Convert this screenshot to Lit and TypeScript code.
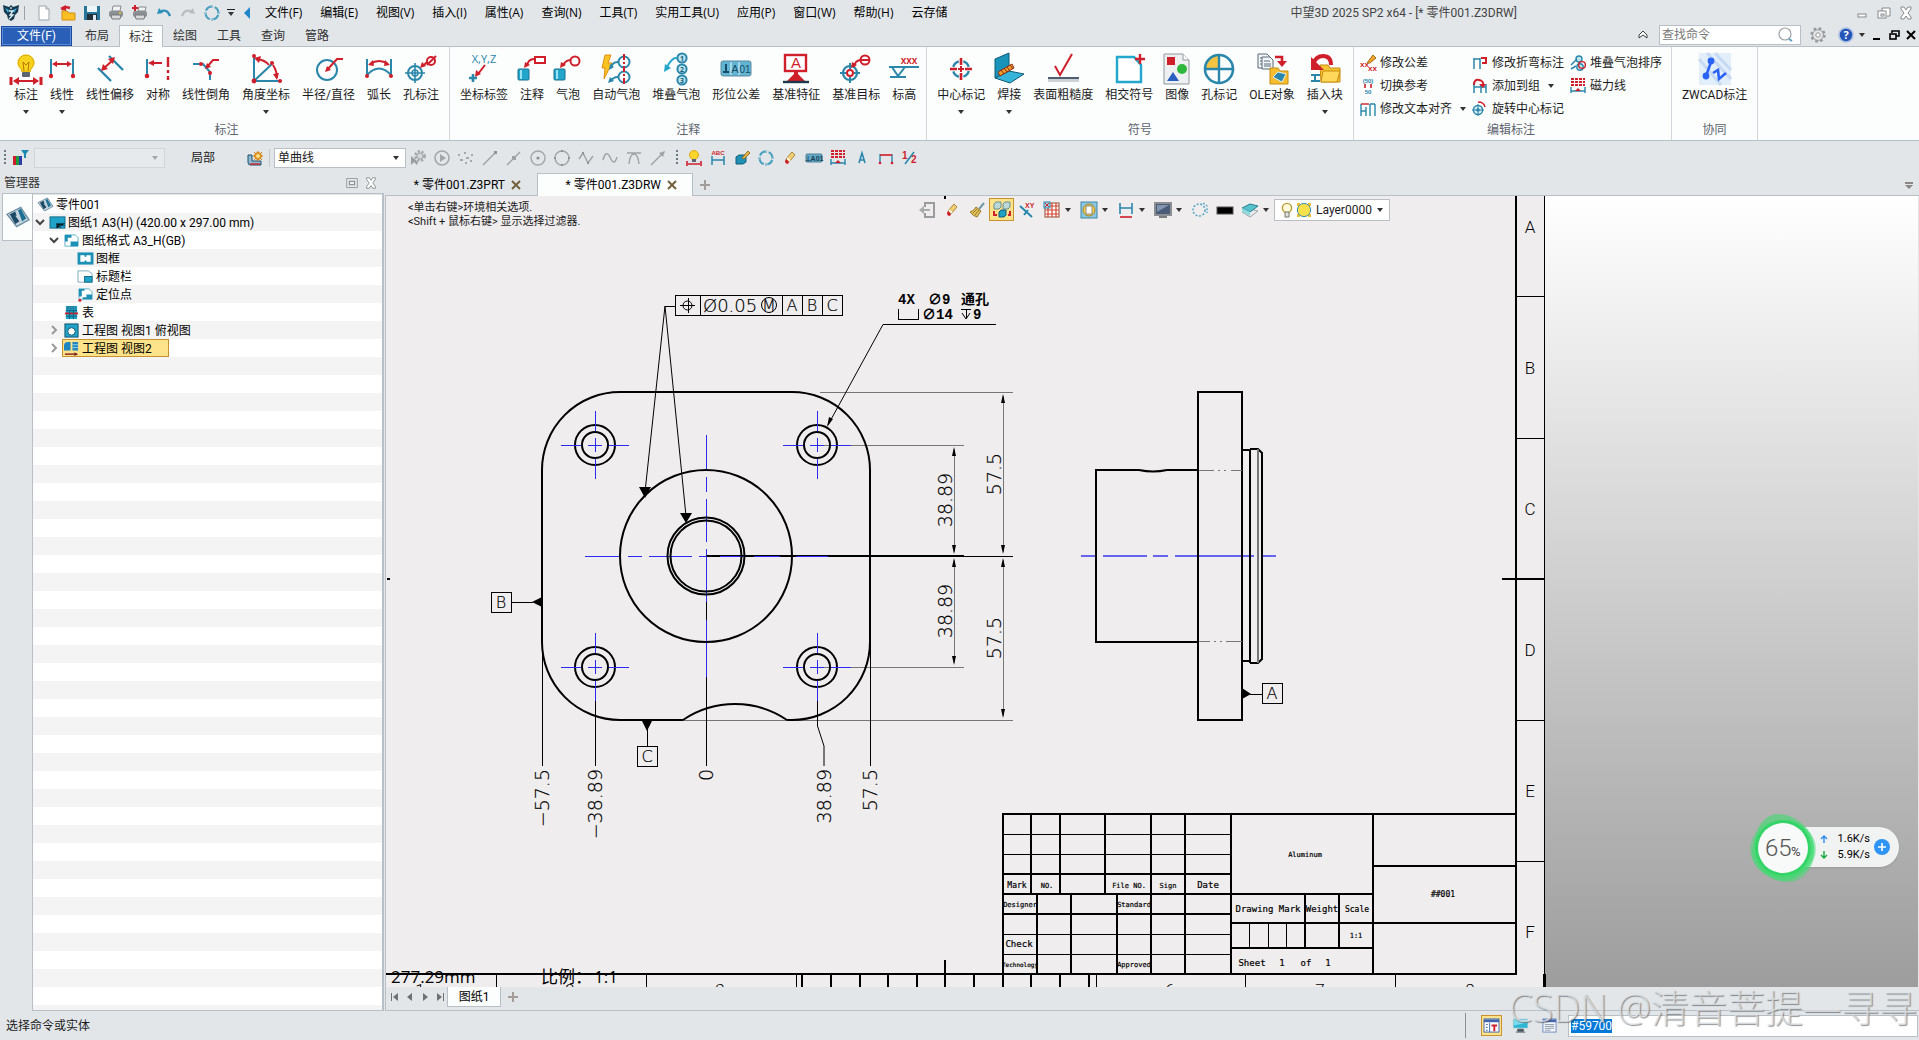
import { LitElement, html, svg, css, nothing } from "lit";
import type { SVGTemplateResult } from "lit";
import { customElement, property, query, state } from "lit/decorators.js";
import { classMap } from "lit/directives/class-map.js";

const R = "#cf1f2b";
const T = "#2a87ab";
const C = "#22a6cb";

/* Large ribbon icons, 32 x 32 */
const big: Record<string, SVGTemplateResult> = {
  bulb: svg`<circle cx="16" cy="10" r="9" fill="#fff38a" opacity=".7"/><path d="M16 2a8 8 0 0 0-8 8c0 4 4 5 4 9h8c0-4 4-5 4-9a8 8 0 0 0-8-8z" fill="#f7d21e" stroke="#d9a400"/><path d="M13 9l1 9M19 9l-1 9M13 9l3 3 3-3" stroke="#b87800" fill="none"/><rect x="12" y="19" width="8" height="5" rx="1" fill="#5c6670"/><path d="M1 24v8M31 24v8" stroke=${R} stroke-width="3"/><path d="M4 28h24" stroke=${R} stroke-width="2"/><path d="M3 28l6-4v8zM29 28l-6-4v8z" fill=${R}/>`,
  linear: svg`<path d="M5 6v17M27 6v17" stroke=${T} stroke-width="2"/><path d="M8 11h16" stroke=${R} stroke-width="2"/><path d="M6 11l5-3v6zM26 11l-5-3v6z" fill=${R}/><circle cx="5" cy="23" r="2.2" fill=${R}/><circle cx="27" cy="23" r="2.2" fill=${R}/>`,
  offset: svg`<path d="M4 15l13 13M15 3l14 14" stroke=${T} stroke-width="2.4"/><path d="M9 16l10-9" stroke=${R} stroke-width="2"/><path d="M7 18l2-7 5 5zM21 4l-7 2 5 5z" fill=${R}/>`,
  symm: svg`<path d="M5 6v18" stroke=${T} stroke-width="2"/><circle cx="5" cy="23" r="2.3" fill=${R}/><path d="M8 10h12" stroke=${R} stroke-width="2"/><path d="M6 10l6-3v6z" fill=${R}/><path d="M26 4v10M26 17v3M26 23v4" stroke=${R} stroke-width="2.4"/>`,
  chamfer: svg`<path d="M3 11h10l7 8v8" stroke=${T} stroke-width="2" fill="none"/><circle cx="11" cy="11" r="2" fill=${R}/><circle cx="20" cy="20" r="2" fill=${R}/><path d="M17 14l6-7h6" stroke=${R} stroke-width="2" fill="none"/><path d="M15 16l2-6 4 4z" fill=${R}/>`,
  angle: svg`<path d="M4 3v25h26M4 28L22 11" stroke=${T} stroke-width="2" fill="none"/><path d="M7 6q8 1 12 6M23 12q4 6 4 13" stroke=${R} stroke-width="2" fill="none"/><path d="M4 5l7-2-2 7zM27 27l-4-6 6-1z" fill=${R}/><circle cx="4" cy="3" r="2" fill=${R}/><circle cx="4" cy="28" r="2.4" fill=${R}/><circle cx="22" cy="10" r="2" fill=${R}/><circle cx="30" cy="28" r="2" fill=${R}/>`,
  radius: svg`<circle cx="14" cy="17" r="10" fill="none" stroke=${T} stroke-width="2"/><path d="M14 17L24 6h6" stroke=${R} stroke-width="2" fill="none"/><path d="M12 19l6-2-4-4z" fill=${R}/>`,
  arc: svg`<path d="M4 6v16M28 6v16M4 22q12-13 24 0" stroke=${T} stroke-width="2" fill="none"/><path d="M7 11q9-6 18 0" stroke=${R} stroke-width="2" fill="none"/><path d="M5 12l5-5 1 6zM27 12l-5-5-1 6z" fill=${R}/><circle cx="4" cy="23" r="2" fill=${R}/><circle cx="28" cy="23" r="2" fill=${R}/>`,
  hole: svg`<circle cx="10" cy="20" r="7" fill="none" stroke=${T} stroke-width="2"/><circle cx="10" cy="20" r="3" fill="none" stroke=${T} stroke-width="1.5"/><path d="M10 10v20M0 20h20" stroke=${T} stroke-width="1.6"/><path d="M18 13l4-4" stroke=${R} stroke-width="2"/><path d="M15 15l2-6 4 4z" fill=${R}/><circle cx="26" cy="8" r="4" fill="none" stroke=${R} stroke-width="2"/><path d="M22 12l9-9" stroke=${R} stroke-width="2"/>`,
  xyz: svg`<text x="16" y="10" font-size="11" text-anchor="middle" fill=${T} font-family="Open Sans">X,Y,Z</text><path d="M17 12l-7 9" stroke=${R} stroke-width="2"/><path d="M7 24l1-7 5 4z" fill=${R}/><path d="M5 21v8M1 25h8" stroke=${T} stroke-width="2.6"/>`,
  note: svg`<rect x="2" y="16" width="11" height="11" rx="1" fill=${C} stroke="#17708f"/><path d="M5 17v9" stroke="#9be2f2" stroke-width="2"/><path d="M11 13q1-7 7-7" stroke=${R} stroke-width="2" fill="none"/><path d="M8 15l1-6 5 3z" fill=${R}/><rect x="19" y="4" width="10" height="6" fill="none" stroke=${R} stroke-width="2"/>`,
  balloon: svg`<rect x="2" y="16" width="11" height="11" rx="1" fill=${C} stroke="#17708f"/><path d="M5 17v9" stroke="#9be2f2" stroke-width="2"/><path d="M11 13q2-6 8-6" stroke=${R} stroke-width="2" fill="none"/><path d="M8 15l1-6 5 3z" fill=${R}/><circle cx="23" cy="8" r="4.5" fill="none" stroke=${R} stroke-width="2"/>`,
  auto: svg`<path d="M5 2h6l-3 8h4L4 26l1-11H2z" fill="#f9c31f" stroke="#e08d12"/><circle cx="24" cy="9" r="5.5" fill="none" stroke=${T} stroke-width="2"/><circle cx="24" cy="24" r="5.5" fill="none" stroke=${T} stroke-width="2"/><path d="M24 1v30" stroke=${R} stroke-width="2" stroke-dasharray="6 2 2 2"/><path d="M18 9q-6 0-7 6M18 24q-5 0-7 4" stroke=${T} stroke-width="2" fill="none"/><path d="M9 17l1-6 4 3zM8 30l2-6 4 4z" fill=${T}/>`,
  stack: svg`${[5, 16, 27].map((y, i) => svg`<circle cx="22" cy=${y} r="4.6" fill="#bfe6f2" stroke=${T} stroke-width="2"/><text x="22" y=${y + 3} font-size="7" font-weight="700" text-anchor="middle" fill="#15607c" font-family="Open Sans">${i + 1}</text>`)}<path d="M17 5q-5-1-10 9" stroke=${C} stroke-width="2" fill="none"/><path d="M4 19l1-8 6 4z" fill=${C}/>`,
  gtol: svg`<rect x="1" y="8" width="30" height="15" rx="2" fill="#62b4d3" stroke="#5c8ba0"/><path d="M11 9v13M19 9v13" stroke="#eaf8ff"/><path d="M6 11v7M3 19h6" stroke="#174d66" stroke-width="2"/><text x="15" y="20" font-size="11" text-anchor="middle" fill="#174d66" font-family="Liberation Sans">A</text><text x="25" y="20" font-size="10" text-anchor="middle" fill="#174d66" font-family="Liberation Sans">01</text>`,
  datum: svg`<rect x="5" y="2" width="21" height="16" fill="#fff" stroke=${R} stroke-width="2.4"/><text x="16" y="15" font-size="15" text-anchor="middle" fill=${R} font-family="Liberation Sans">A</text><path d="M14 17h4v4l7 7H7l7-7z" fill=${R}/><path d="M3 29h26" stroke="#1c3a4c" stroke-width="2.4"/>`,
  target: svg`<circle cx="10" cy="20" r="7" fill="none" stroke=${T} stroke-width="2.2"/><circle cx="10" cy="20" r="3" fill="#fff" stroke=${R} stroke-width="2"/><path d="M10 10v6M10 24v6M0 20h6M14 20h6" stroke=${T} stroke-width="2"/><path d="M14 14q1-7 7-7" stroke=${R} stroke-width="2" fill="none"/><path d="M11 15l1-6 5 3z" fill=${R}/><circle cx="25" cy="7" r="4.5" fill="none" stroke=${R} stroke-width="2"/><path d="M20 7h10" stroke=${R} stroke-width="2"/>`,
  elev: svg`<text x="21" y="11" font-size="10" font-weight="700" text-anchor="middle" fill=${R} font-family="Liberation Sans">xxx</text><path d="M1 14h30M4 14l6 9 7-9M2 24h16" stroke=${T} stroke-width="2" fill="none"/>`,
  center: svg`<circle cx="16" cy="16" r="8" fill="none" stroke=${T} stroke-width="2.4" stroke-dasharray="8 4.6" stroke-dashoffset="-2"/><path d="M16 5v7M16 20v7M5 16h7M20 16h7" stroke=${R} stroke-width="2.6"/><path d="M16 13v6M13 16h6" stroke=${R} stroke-width="2"/>`,
  weld: svg`<path d="M2 6l14-6v19L2 25z" fill="#1a93bb" stroke="#0f5a74"/><path d="M2 25l14-7 15 3-14 9z" fill="#35b5da" stroke="#0f5a74"/><path d="M5 19l14-8 2 4-14 8z" fill="#ef9f2d" stroke="#8c2a12"/><path d="M8 17l3 4M11 15l3 4M14 14l3 4M17 12l3 4" stroke="#8c2a12"/>`,
  rough: svg`<path d="M8 13l5 9L25 1" stroke=${R} stroke-width="2" fill="none"/><rect x="1" y="24" width="31" height="2" fill="#4d5f70"/><rect x="1" y="26" width="31" height="3" fill="#ccd2d8"/>`,
  cross: svg`<path d="M4 4h17l7 8v17H4z" fill="#fff" stroke=${C} stroke-width="2.4"/><path d="M27 1v10M22 6h10" stroke=${R} stroke-width="2.4"/>`,
  image: svg`<path d="M3 1h19l6 6v24H3z" fill="#eef0f1" stroke="#8f979d"/><path d="M22 1v6h6" fill="#fff" stroke="#8f979d"/><rect x="6" y="4" width="8" height="8" fill=${R}/><circle cx="21" cy="16" r="5" fill="#2db83d"/><path d="M12 19l6 9H6z" fill="#2a5fc0"/>`,
  holemark: svg`<path d="M16 2A14 14 0 0 0 2 16h14z" fill="#f6c443"/><circle cx="16" cy="16" r="14" fill="none" stroke=${T} stroke-width="2.6"/><path d="M16 1v30M1 16h30" stroke=${T} stroke-width="2.4"/>`,
  ole: svg`<path d="M2 1h9l3 3v11H2z" fill="#f3f6f8" stroke="#5b6b78"/><path d="M6 4h8l3 3v9H6z" fill="#f3f6f8" stroke="#5b6b78"/><path d="M8 8h6M8 11h7M8 13h7M4 5h2M4 8h2M4 11h2" stroke="#5b6b78"/><path d="M19 4h7v5" stroke=${R} stroke-width="2.6" fill="none"/><path d="M21 8h10l-5 6z" fill=${R}/><path d="M14 15h8l2 3h8v13H14z" fill="#f6bd30" stroke="#c58d10"/><path d="M17 24l5-5 8 2-4 8z" fill="#2a87ab" stroke="#d6eef6"/>`,
  block: svg`<path d="M11 12h8l2 3h10v14H12z" fill="#f6c330" stroke="#c58d10"/><path d="M14 18h17l-3 11H12z" fill="#ffd75a" stroke="#c58d10"/><path d="M4 11Q7 3 14 3q8 0 8 9" stroke=${R} stroke-width="4" fill="none"/><path d="M2 4v13h13z" fill=${R}/><path d="M2 22h9M6 22v6M2 28h9" stroke=${T} stroke-width="2"/>`,
  zwcad: svg`<rect width="32" height="32" fill="#e3eefb"/><path d="M8 0l24 26M16 0l16 17M0 6l22 26" stroke="#c6daf3" stroke-width="3"/><path d="M12 9L7 23M14 20l5-3 1 9 7-6" stroke="#2a63f5" stroke-width="2.6" fill="none"/><circle cx="12" cy="8" r="3.4" fill="#2a63f5"/><circle cx="7" cy="23" r="3.4" fill="#2a63f5"/>`,
};

/* Small toolbar icons, 16 x 16 */
const small: Record<string, SVGTemplateResult> = {
  logo: svg`<path d="M0 0l6 2 2-2 2 2 6-2-1 7-3 3-1 4-3 2-3-2-1-4-3-3z" fill="#17394e"/><path d="M2 3l4 2-1 3zM14 3l-4 2 1 3z" fill="#3bb3dc"/><path d="M6 6h4l-3 4h3l-4 4M8 2v2" stroke="#dff3fa" stroke-width="1.3" fill="none"/>`,
  new: svg`<path d="M3 1h7l3 3v11H3z" fill="#fff" stroke="#9aa3aa"/><path d="M10 1v3h3" fill="#dfe4e8" stroke="#9aa3aa"/>`,
  open: svg`<path d="M2 6h5l2 2h6v7H2z" fill="#fbbf24" stroke="#d48f10"/><path d="M2 5q2-4 8-2" stroke=${R} stroke-width="2.4" fill="none"/><path d="M0 3l6-3v6z" fill=${R}/>`,
  save: svg`<path d="M0 1h16v14H0z" fill="#27759b"/><rect x="3" y="1" width="10" height="6" fill="#eef5f9"/><rect x="3" y="9" width="10" height="6" fill="#23313b"/><rect x="9" y="10" width="3" height="5" fill="#dfe9ef"/>`,
  print: svg`<path d="M5 1h8l-1 5H4z" fill="#f2f3f4" stroke="#85898c"/><rect x="1" y="6" width="14" height="6" rx="2" fill="#8c9093"/><path d="M3 10h10l-1 4H4z" fill="#d8dadb" stroke="#75797c"/><circle cx="12" cy="8" r="1" fill="#f5c33b"/>`,
  printp: svg`<path d="M7 2h7l-1 4H6z" fill="#f2f3f4" stroke="#85898c"/><rect x="1" y="6" width="14" height="6" rx="2" fill="#8c9093"/><path d="M3 10h10l-1 4H4z" fill="#d8dadb" stroke="#75797c"/><path d="M3 0v6M0 3h6" stroke=${R} stroke-width="2"/>`,
  undo: svg`<path d="M4 7q7-4 10 4" stroke="#2d8fb8" stroke-width="2.4" fill="none"/><path d="M1 9l2-6 4 5z" fill="#2d8fb8"/>`,
  redo: svg`<path d="M12 7Q5 3 2 11" stroke="#b9bdc0" stroke-width="2.4" fill="none"/><path d="M15 9l-2-6-4 5z" fill="#b9bdc0"/>`,
  orbit: svg`<circle cx="8" cy="8" r="6.5" fill="none" stroke="#49a0be" stroke-width="2" stroke-dasharray="6.6 3.6" stroke-dashoffset="-2"/><path d="M8 0v3M8 13v3M0 8h3M13 8h3" stroke="#49a0be"/>`,
  filter: svg`<rect x="0" y="6" width="3" height="9" fill=${R}/><rect x="3" y="6" width="3" height="9" fill="#1d9b3c"/><rect x="6" y="6" width="3" height="9" fill="#2b3ea8"/><path d="M8 0h8l-3 4v4h-2V4z" fill="#1d8bb0"/>`,
  local: svg`<path d="M1 5h4v6h9v4H3q-2 0-2-3z" fill="#8fb9d0" stroke="#1d4f6c"/><circle cx="11" cy="6" r="3.4" fill="#f4b63f" stroke="#cf7f13"/><path d="M11 1v10M6 6h10M7 2l8 8M15 2l-8 8" stroke="#cf7f13"/><circle cx="11" cy="6" r="2" fill="#fbe08a"/><path d="M3 14h10" stroke=${R} stroke-width="1.4"/>`,
  gear: svg`<circle cx="8" cy="8" r="6.4" fill="none" stroke="#96999b" stroke-width="2.6" stroke-dasharray="2.6 2.4"/><circle cx="8" cy="8" r="5.4" fill="#e3e5e6" stroke="#96999b"/><circle cx="8" cy="8" r="2.2" fill="#f6f7f7" stroke="#96999b"/>`,
  gearcur: svg`<circle cx="10" cy="6" r="4.4" fill="none" stroke="#a6a9ab" stroke-width="3" stroke-dasharray="2.2 1.4"/><circle cx="10" cy="6" r="3" fill="#d5d8da" stroke="#a6a9ab"/><path d="M1 6v9l3-3 3 3 1-3z" fill="#9a9d9f"/>`,
  play: svg`<circle cx="8" cy="8" r="7" fill="none" stroke="#a3a6a8" stroke-width="1.6"/><path d="M6 4l6 4-6 4z" fill="#a3a6a8"/>`,
  dots: svg`<path d="M0 5h2M6 3h2M13 5h2M2 10h3M8 8h3M7 13h2M12 11h2" stroke="#a6a9ab" stroke-width="2"/>`,
  seg: svg`<path d="M1 15L14 2" stroke="#9fa2a4" stroke-width="1.4"/><rect x="12" y="1" width="3" height="3" fill="#8f9294"/>`,
  mid: svg`<path d="M1 15L14 2" stroke="#9fa2a4" stroke-width="1.4"/><rect x="6" y="6" width="4" height="4" fill="#9fa2a4"/>`,
  cdot: svg`<circle cx="8" cy="8" r="7" fill="none" stroke="#a3a6a8" stroke-width="1.4"/><circle cx="8" cy="8" r="1.6" fill="#8f9294"/>`,
  cquad: svg`<circle cx="8" cy="8" r="7" fill="none" stroke="#a3a6a8" stroke-width="1.4"/><path d="M7 1h2M7 15h2M1 7v2M15 7v2" stroke="#8f9294" stroke-width="2"/>`,
  spl: svg`<path d="M1 9l4-6 5 10 5-7" fill="none" stroke="#9fa2a4" stroke-width="1.4"/><path d="M4 2h2v2H4zM9 12h2v2H9z" fill="#8f9294"/>`,
  wave: svg`<path d="M1 10q3-11 7-3 4 10 7 0" fill="none" stroke="#9fa2a4" stroke-width="1.4"/>`,
  tang: svg`<path d="M1 3h14M3 14q1-10 5-10t5 10" fill="none" stroke="#9fa2a4" stroke-width="1.4"/>`,
  ray: svg`<path d="M1 15L13 3" stroke="#9fa2a4" stroke-width="1.4" fill="none"/><path d="M15 1l-2 6-4-4z" fill="#9fa2a4"/>`,
  bulb: svg`<circle cx="8" cy="5" r="4.5" fill="#fbd52c" stroke="#e0a90c"/><rect x="6" y="9" width="4" height="3" fill="#5c6670"/><path d="M1 11v5M15 11v5M2 14h12" stroke=${R} stroke-width="1.6"/>`,
  abc: svg`<text x="8" y="5" font-size="6" font-weight="700" text-anchor="middle" fill=${R} font-family="Liberation Sans">ABC</text><path d="M2 6v9M14 6v9M2 10h12" stroke=${T} stroke-width="1.5"/>`,
  paint: svg`<path d="M2 7l3-2h7v7l-3 2H2z" fill="#1e8fb5" stroke="#125f7a"/><path d="M8 8l6-7 2 2-6 6z" fill="#e7b64a" stroke="#94701f"/>`,
  eraser: svg`<path d="M4 9l6-7 3 3-6 7z" fill="#f2cf75" stroke="#a98635"/><path d="M4 9l3 3-1 2q-3 0-3-3z" fill=${R}/><path d="M5 8l3 3" stroke="#fff" stroke-width="1.6"/>`,
  gtol: svg`<rect x="0" y="4" width="16" height="8" rx="1" fill="#62a9c6" stroke="#4f8299"/><text x="8" y="11" font-size="7" font-weight="700" text-anchor="middle" fill="#143e52" font-family="Liberation Sans">⊥A01</text>`,
  magnet: svg`<path d="M1 1h14M1 4h14M1 7h14" stroke=${R} stroke-width="2" stroke-dasharray="3 1"/><path d="M1 9v6M15 9v6M1 13h14" stroke=${T} stroke-width="1.4"/><path d="M5 13l3-3 3 3z" fill=${R}/>`,
  cone: svg`<path d="M5 13l3-10 3 10M6 10h4" stroke=${T} stroke-width="1.6" fill="none"/>`,
  dim: svg`<path d="M2 4v9M14 4v9" stroke=${T} stroke-width="1.4"/><path d="M2 5h12" stroke=${R} stroke-width="1.6"/><circle cx="2" cy="13" r="1.3" fill=${R}/><circle cx="14" cy="13" r="1.3" fill=${R}/>`,
  half: svg`<text x="0" y="9" font-size="10" font-weight="700" fill=${R} font-family="Liberation Sans">1</text><text x="9" y="13" font-size="10" font-weight="700" fill=${R} font-family="Liberation Sans">2</text><path d="M3 14L12 2" stroke=${T} stroke-width="1.5"/>`,
  help: svg`<circle cx="8" cy="8" r="7" fill="#2457b5" stroke="#a9bfe4" stroke-width="1.6"/><text x="8" y="12" font-size="11" font-weight="700" text-anchor="middle" fill="#fff" font-family="Open Sans">?</text>`,
  find: svg`<circle cx="7" cy="7" r="6" fill="none" stroke="#9da3a8" stroke-width="1.2"/><path d="M11 12l3 2" stroke="#5c9fc0" stroke-width="2"/>`,
  up: svg`<path d="M4 11V8l4-4 4 4v3l-4-3z" fill="#fff" stroke="#3b3f42"/>`,
  min: svg`<rect x="4" y="9" width="8" height="3" fill="#fff" stroke="#85888b"/>`,
  restore: svg`<path d="M6 3h8v8h-3M6 3v3" fill="#fff" stroke="#85888b"/><rect x="2" y="6" width="8" height="7" fill="#fff" stroke="#85888b"/><rect x="5" y="9" width="3" height="2" fill="none" stroke="#85888b"/>`,
  close: svg`<path d="M3 2h3l2 3 2-3h3v2l-3 4 3 4v2h-3l-2-3-2 3H3v-2l3-4-3-4z" fill="#fff" stroke="#85888b"/>`,
  dmin: svg`<path d="M4 12h7" stroke="#000" stroke-width="2"/>`,
  drest: svg`<path d="M6 6V4h7v5h-3" fill="none" stroke="#000" stroke-width="1.6"/><rect x="4" y="7" width="6" height="5" fill="none" stroke="#000" stroke-width="1.6"/>`,
  dclose: svg`<path d="M4 4l8 8M12 4l-8 8" stroke="#000" stroke-width="2"/>`,
  tol: svg`<text x="0" y="12" font-size="8" font-weight="700" fill=${R} font-family="Liberation Sans">xx</text><text x="8" y="16" font-size="8" font-weight="700" fill=${R} font-family="Liberation Sans">xx</text><path d="M7 8l6-8 3 3-6 5z" fill="#f2a52c" stroke="#a86a12"/>`,
  swap: svg`<text x="8" y="5" font-size="6" text-anchor="middle" fill=${T} font-weight="700" font-family="Liberation Sans">(50)</text><text x="8" y="16" font-size="6" text-anchor="middle" fill=${T} font-weight="700" font-family="Liberation Sans">50</text><path d="M5 6v4M11 6v4" stroke=${R} stroke-width="1.6"/>`,
  align: svg`<path d="M1 3v12M6 6v9M10 3v12M15 3v12M10 3h5M1 10h5" stroke=${T} stroke-width="1.4"/><path d="M1 3h8" stroke=${R} stroke-width="1.4"/>`,
  jog: svg`<path d="M2 3v11M8 3v11M2 4h6" stroke=${T} stroke-width="1.5"/><path d="M9 3h5v5h-4" stroke=${R} stroke-width="2" fill="none"/>`,
  group: svg`<path d="M2 4v11M9 6v9M14 6v9M2 9h12" stroke=${T} stroke-width="1.5"/><path d="M2 7q0-6 5-5t4 5" stroke=${R} stroke-width="2" fill="none"/><path d="M7 6h7l-3 4z" fill=${R}/>`,
  rotc: svg`<circle cx="6" cy="9" r="4.6" fill="#d9eef5" stroke=${T} stroke-width="1.5"/><circle cx="6" cy="9" r="1.8" fill=${T}/><path d="M6 3v12M0 9h12" stroke=${T}/><path d="M6 1q6 0 7 5" stroke=${R} stroke-width="1.5" fill="none"/>`,
  sortb: svg`<circle cx="9" cy="4" r="3" fill="#bfe6f2" stroke=${T} stroke-width="1.4"/><circle cx="10" cy="12" r="3.2" fill="#bfe6f2" stroke=${T} stroke-width="1.4"/><circle cx="12" cy="10" r="3.4" fill="none" stroke=${R} stroke-width="1.4"/><path d="M1 10l6-6M1 14l5-3" stroke=${T} stroke-width="1.5"/>`,
  exit: svg`<path d="M6 5V1h9v14H6v-4" fill="none" stroke="#9a9c9e" stroke-width="2"/><path d="M0 8l5-4v3h6v2H5v3z" fill="#a9abad"/>`,
  broom: svg`<path d="M15 1l-5 6" stroke="#6f99a8" stroke-width="2"/><path d="M7 5l5 4-4 6Q4 14 1 10q4-1 6-5z" fill="#e3c259" stroke="#94782a"/><path d="M4 11l4-4M6 13l4-5" stroke="#94782a"/>`,
  comp: svg`<path d="M0 2l2-2h5v5l-2 2H0zM9 2l2-2h5v5l-2 2H9z" fill="#bcd9d8" stroke="#6a8f90"/><path d="M5 10l2-2h5v5l-2 2H5z" fill="#1e9fc4" stroke="#125f7a"/><path d="M0 9v4h3M16 9v4h-2" stroke=${R} stroke-width="2" fill="none"/>`,
  xy: svg`<path d="M1 4l12 11M9 8l-4 5" stroke=${T} stroke-width="2"/><text x="6" y="6" font-size="7" font-weight="700" fill=${R} font-family="Liberation Sans">XY</text>`,
  grid: svg`<rect x="1" y="1" width="14" height="14" fill="#fff" stroke="#8d4a2c"/><path d="M4 1v14M8 1v14M12 1v14M1 4h14M1 8h14M1 12h14" stroke="#d1452f" stroke-width="1.2"/><rect x="0" y="0" width="6" height="6" fill="#a7d6e4" stroke=${T}/><path d="M1 1l4 4M5 1L1 5" stroke=${R}/>`,
  view: svg`<rect x="0" y="0" width="16" height="16" fill="#8ac8e2" stroke="#3e86a6"/><circle cx="8" cy="8" r="6" fill="#f3cf4a" stroke="#a8862a"/><rect x="5" y="4" width="6" height="8" fill="#fff" stroke="#888"/>`,
  dimv: svg`<path d="M2 1v11M14 1v11M2 6h12" stroke=${T} stroke-width="1.6"/><path d="M2 15h12" stroke=${R} stroke-width="1.6"/>`,
  screen: svg`<rect x="0" y="1" width="16" height="12" fill="#4a5c78" stroke="#8b8f93" stroke-width="2"/><path d="M2 3h12L2 10z" fill="#8494ad"/><path d="M4 15h8" stroke="#777b7e" stroke-width="2"/>`,
  dotc: svg`<circle cx="7" cy="8" r="6" fill="none" stroke="#5da9c2" stroke-width="1.6" stroke-dasharray="2 1.6"/><path d="M11 1l4 3v7" stroke="#5da9c2" stroke-width="1.4" stroke-dasharray="2 1.6" fill="none"/>`,
  black: svg`<rect x="0" y="5" width="16" height="7" fill="#000" stroke="#555"/>`,
  layers: svg`<path d="M0 10l8-3 8 2-8 6z" fill="#e8ecee" stroke="#9aa5aa"/><path d="M0 6l8-4 8 2-8 6z" fill="#59c3cd" stroke="#24808c"/><path d="M0 6v4l8 4v-4z" fill="#8ed9de"/>`,
  lamp: svg`<circle cx="8" cy="6" r="4.6" fill="#fffadb" stroke="#b99a28" stroke-width="1.4"/><path d="M6 10h4v5H6z" fill="#e2e2dc" stroke="#77776c"/>`,
  sun: svg`<path d="M1 1h3v3H1zM12 1h3v3h-3zM1 12h3v3H1zM12 12h3v3h-3z" fill="#e9c22f"/><circle cx="8" cy="8" r="6.6" fill="#f8e04a" stroke="#3a8fae"/>`,
  part: svg`<path d="M0 6l10-5 6 9-9 5z" fill="#c2d3de" stroke="#6d8fa3"/><path d="M2 6l4-2 1 3h-1l3 4-3 2z" fill="#1d4a66"/><path d="M8 3l2-1 4 7-3 2z" fill="#1e6f94"/>`,
  sheet: svg`<rect x="0" y="2" width="16" height="12" fill="#1fa3c9" stroke="#126a86"/><path d="M7 14V9h9M11 9v5M7 11h9" stroke="#0c4f66"/>`,
  fmt: svg`<path d="M1 2h11l3 3v9H1z" fill="#fff" stroke="#5fb0ca"/><path d="M1 2h7v3H4v4H1zM7 9h8v5H7z" fill="#1d90b5"/>`,
  frame: svg`<rect x="1" y="3" width="14" height="10" fill="#fff" stroke="#1d90b5" stroke-width="3"/><path d="M8 3v3M8 10v3" stroke="#1d90b5" stroke-width="2"/>`,
  tblk: svg`<path d="M0 2h11l4 3v9H0z" fill="#fff" stroke="#7ba9bb"/><rect x="7" y="8" width="8" height="6" fill="#1fa3c9" stroke="#126a86"/>`,
  anchor: svg`<path d="M1 2h11l3 3v8H1z" fill="#fff" stroke="#5fb0ca"/><path d="M1 2h6v2H4v6H1zM9 8h6v5H5v-2h4z" fill="#1d90b5"/><circle cx="2" cy="14" r="1.6" fill=${R}/>`,
  table: svg`<rect x="2" y="1" width="12" height="14" fill="#1fa3c9"/><path d="M3 2h10M3 4h10" stroke="#2f5a6c" stroke-dasharray="2 1"/><path d="M1 9h14" stroke=${R} stroke-width="2"/><path d="M6 6v9M10 6v9M2 12h12M2 6h12" stroke="#0c5f7a"/>`,
  view1: svg`<rect x="1" y="1" width="14" height="14" fill="#1fa3c9" stroke="#0d5068"/><circle cx="8" cy="9" r="4" fill="#fff" stroke="#0d5068"/>`,
  view2: svg`<path d="M0 5q0-4 4-4h3v9H0zM9 1h6v9H9z" fill="#2086c0"/><path d="M9 4h6M9 7h6" stroke="#9cd6ee"/><path d="M1 14h13" stroke="#8c2a24" stroke-width="1.6"/><path d="M11 12l4 2-4 2z" fill="#7a2c24"/>`,
  pin: svg`<rect x="2" y="3" width="12" height="10" fill="#eef0f1" stroke="#8b8f93"/><rect x="5" y="6" width="6" height="4" fill="none" stroke="#8b8f93" stroke-width="1.4"/>`,
  props: svg`<rect x="0" y="1" width="16" height="14" fill="#fff" stroke="#3d63ad"/><path d="M0 3h16" stroke="#3d63ad" stroke-width="3"/><path d="M2 7h2M2 10h2M2 13h2M6 5v10" stroke="#3d63ad"/><path d="M8 8h6M11 7v7" stroke=${R} stroke-width="2"/>`,
  monitor: svg`<rect x="0" y="1" width="16" height="10" fill="#2cb7d3" stroke="#d8dde0"/><path d="M1 2h14v3L1 8z" fill="#7bdcec"/><path d="M5 12h6v2H5zM3 15h10" fill="#4b575e" stroke="#4b575e"/>`,
  list: svg`<rect x="1" y="1" width="14" height="14" fill="#f5f8fd" stroke="#6d86bd"/><path d="M1 3h14" stroke="#4668ae" stroke-width="3"/><path d="M3 7h10M3 9h10M3 11h10M3 13h6" stroke="#8d98a8"/>`,
};

const caret = html`<span class="caret"></span>`;

const base = css`
  * { box-sizing: border-box; }
  :host { display: block; font: 12px/16px Roboto, "Noto Sans CJK SC", sans-serif; color: #1b1b1b; }
  button, input, select { font: inherit; color: inherit; margin: 0; padding: 0; border: 0; background: none; border-radius: 0; }
  button { display: inline-flex; align-items: center; justify-content: center; white-space: nowrap; }
  a { color: inherit; text-decoration: none; }
  .ico { width: 16px; height: 16px; flex: none; display: block; overflow: visible; }
  .caret { border: 3px solid transparent; border-top: 4px solid #333; border-bottom: 0; flex: none; }
  .sel { display: grid; align-items: center; background: #fff; border: 1px solid #b9bfc6; height: 20px; }
  .sel > * { grid-area: 1 / 1; }
  .sel select { appearance: none; width: 100%; height: 18px; padding: 0 16px 0 3px; outline: none; }
  .sel .caret { justify-self: end; margin-right: 6px; pointer-events: none; }
`;

type Tool = [icon: string, label: string, menu?: boolean];

@customElement("tool-ribbon")
export class ToolRibbon extends LitElement {
  static styles = [base, css`
    :host { background: #fcfdfd; border-bottom: 1px solid #b9bfc6; }
    .groups { display: flex; height: 93px; padding-left: 4px; }
    .group { display: flex; flex-direction: column; justify-content: space-between; padding: 6px 10px 2px; border-right: 1px solid #d3d6da; }
    .tools { display: flex; gap: 12px; align-items: flex-start; }
    .tool { flex-direction: column; justify-content: flex-start; }
    .tool svg { width: 32px; height: 32px; display: block; margin: 0 -12px; overflow: visible; }
    .tool span.name { margin-top: 2px; }
    .tool .caret { margin-top: 7px; }
    .title { text-align: center; color: #5c6470; line-height: 16px; }
    .cols { display: flex; gap: 6px; }
    .col { display: flex; flex-direction: column; gap: 7px; align-items: flex-start; }
    .mini { gap: 4px; height: 16px; }
    .mini .caret { margin-left: 4px; }
    .edit { padding: 8px 9px 2px 6px; }
  `];

  private groups: { title: string; tools: Tool[] }[] = [
    { title: "标注", tools: [["bulb", "标注", true], ["linear", "线性", true], ["offset", "线性偏移"], ["symm", "对称"], ["chamfer", "线性倒角"], ["angle", "角度坐标", true], ["radius", "半径/直径"], ["arc", "弧长"], ["hole", "孔标注"]] },
    { title: "注释", tools: [["xyz", "坐标标签"], ["note", "注释"], ["balloon", "气泡"], ["auto", "自动气泡"], ["stack", "堆叠气泡"], ["gtol", "形位公差"], ["datum", "基准特征"], ["target", "基准目标"], ["elev", "标高"]] },
    { title: "符号", tools: [["center", "中心标记", true], ["weld", "焊接", true], ["rough", "表面粗糙度"], ["cross", "相交符号"], ["image", "图像"], ["holemark", "孔标记"], ["ole", "OLE对象"], ["block", "插入块", true]] },
  ];

  private edit: Tool[][] = [
    [["tol", "修改公差"], ["swap", "切换参考"], ["align", "修改文本对齐", true]],
    [["jog", "修改折弯标注"], ["group", "添加到组", true], ["rotc", "旋转中心标记"]],
    [["sortb", "堆叠气泡排序"], ["magnet", "磁力线"]],
  ];

  private tool([icon, label, menu]: Tool) {
    return html`<button class="tool"><svg viewBox="0 0 32 32" aria-hidden="true">${big[icon]}</svg><span class="name">${label}</span>${menu ? caret : nothing}</button>`;
  }

  render() {
    return html`<div class="groups">
      ${this.groups.map((g) => html`<section class="group"><div class="tools">${g.tools.map((t) => this.tool(t))}</div><div class="title">${g.title}</div></section>`)}
      <section class="group edit">
        <div class="cols">${this.edit.map((col) => html`<div class="col">${col.map(([icon, label, menu]) => html`<button class="mini"><svg class="ico" viewBox="0 0 16 16" aria-hidden="true">${small[icon]}</svg><span>${label}</span>${menu ? caret : nothing}</button>`)}</div>`)}</div>
        <div class="title">编辑标注</div>
      </section>
      <section class="group"><div class="tools">${this.tool(["zwcad", "ZWCAD标注"])}</div><div class="title">协同</div></section>
    </div>`;
  }
}

interface Node { level: number; icon: string; label: string; open?: boolean; selected?: boolean; }

@customElement("manager-panel")
export class ManagerPanel extends LitElement {
  static styles = [base, css`
    :host { display: flex; flex-direction: column; }
    header { display: flex; align-items: center; height: 20px; padding: 0 4px; color: #333; }
    header span { flex: 1; }
    header button { width: 19px; height: 16px; }
    header .ico { width: 14px; height: 14px; }
    .panel { flex: 1; display: flex; min-height: 0; margin-left: 2px; }
    .rail { width: 30px; border-top: 1px solid #b9bfc6; }
    .rail button { width: 30px; height: 47px; background: #fcfdfd; border: 1px solid #b9bfc6; border-width: 0 0 1px 1px; }
    .rail .ico { width: 24px; height: 22px; }
    ul { flex: 1; margin: 0; padding: 1px 0 0; list-style: none; border: 2px solid #b9bfc6; border-width: 1px 2px 1px 1px; background: repeating-linear-gradient(#fff 0 18px, #f4f4f4 18px 36px) content-box #fff; color: #000; }
    li { display: flex; align-items: center; height: 18px; padding-left: 3px; }
    .l1 { padding-left: 0; }
    .l2 { padding-left: 14px; }
    .l3 { padding-left: 43px; }
    .tw { width: 14px; height: 14px; margin-right: 1px; flex: none; fill: none; stroke: #9a9a9a; stroke-width: 2; }
    .open { stroke: #444; }
    .gap { width: 15px; }
    .item { display: flex; align-items: center; gap: 3px; height: 18px; padding: 0 2px; white-space: nowrap; }
    .item .txt { padding-top: 2px; }
    .item .ico { width: 15px; height: 15px; }
    .on { background: #ffe38a; box-shadow: inset 0 0 0 1px #c9922e; padding-right: 17px; }
  `];

  private nodes: Node[] = [
    { level: 0, icon: "part", label: "零件001" },
    { level: 1, icon: "sheet", label: "图纸1 A3(H) (420.00 x 297.00 mm)", open: true },
    { level: 2, icon: "fmt", label: "图纸格式 A3_H(GB)", open: true },
    { level: 3, icon: "frame", label: "图框" },
    { level: 3, icon: "tblk", label: "标题栏" },
    { level: 3, icon: "anchor", label: "定位点" },
    { level: 2, icon: "table", label: "表" },
    { level: 2, icon: "view1", label: "工程图 视图1 俯视图", open: false },
    { level: 2, icon: "view2", label: "工程图 视图2", open: false, selected: true },
  ];

  private twist(n: Node) {
    if (n.open === undefined) return n.level === 2 ? html`<span class="gap"></span>` : nothing;
    return html`<svg class=${classMap({ tw: true, open: n.open })} viewBox="0 0 14 14">${n.open ? svg`<path d="M3 5l4 4 4-4"/>` : svg`<path d="M5 3l4 4-4 4"/>`}</svg>`;
  }

  render() {
    return html`
      <header><span>管理器</span><button aria-label="停靠"><svg class="ico" viewBox="0 0 16 16">${small.pin}</svg></button><button aria-label="关闭"><svg class="ico" viewBox="0 0 16 16">${small.close}</svg></button></header>
      <div class="panel">
        <div class="rail"><button aria-label="管理器"><svg class="ico" viewBox="0 0 16 16">${small.part}</svg></button></div>
        <ul role="tree">${this.nodes.map((n) => html`<li role="treeitem" class="l${n.level}">${this.twist(n)}<span class=${classMap({ item: true, on: !!n.selected })}><svg class="ico" viewBox="0 0 16 16">${small[n.icon]}</svg><span class="txt">${n.label}</span></span></li>`)}</ul>
      </div>`;
  }
}

const CX = 706, CY = 556, PITCH = 111;

@customElement("drawing-sheet")
export class DrawingSheet extends LitElement {
  static styles = css`
    :host { display: block; overflow: hidden; background: linear-gradient(#fff, #9d9d9d); }
    svg { display: block; width: 100%; height: 100%; }
    .paper { fill: #efedee; }
    .k { fill: none; stroke: #000; }
    .w2 { stroke-width: 2; }
    .w3 { stroke-width: 3; }
    .crisp { shape-rendering: crispEdges; }
    .g { fill: none; stroke: #777; }
    .b { fill: none; stroke: #2a2af0; }
    .dim { font: 200 19px "DejaVu Sans Light", "DejaVu Sans", sans-serif; stroke: #000; stroke-width: .2px; }
    .tag { font: 200 16px "DejaVu Sans Light", "DejaVu Sans", sans-serif; text-anchor: middle; stroke: #000; stroke-width: .2px; }
    .gt { font-size: 18px; }
    .zone { font: 300 17px Roboto, sans-serif; text-anchor: middle; }
    .note { font: 700 14px "Liberation Mono", "Noto Sans CJK SC", monospace; white-space: pre; }
    .tb { font-family: "DejaVu Sans Mono", "Liberation Mono", monospace; text-anchor: middle; stroke: #000; stroke-width: .2px; }
    .s6 { font-size: 6px; } .s7 { font-size: 7px; } .s8 { font-size: 8px; } .s9 { font-size: 9px; }
    .read { font: 17px "Open Sans", "Noto Sans CJK SC", sans-serif; }
  `;

  private hole(x: number, y: number) {
    return svg`<circle class="k w2" cx=${x} cy=${y} r="20"/><circle class="k w2" cx=${x} cy=${y} r="13"/>
      <path class="b crisp" d="M${x - 34} ${y}h20M${x - 7} ${y}h14M${x + 14} ${y}h20M${x} ${y - 34}v20M${x} ${y - 7}v14M${x} ${y + 14}v20"/>`;
  }

  private vtext(x: number, y: number, t: string, anchor = "middle") {
    return svg`<text class="dim" transform="translate(${x + 7} ${y}) rotate(-90)" text-anchor=${anchor}>${t}</text>`;
  }

  private tag(x: number, y: number, t: string) {
    return svg`<rect class="k crisp" x=${x - 10} y=${y - 10} width="20" height="20"/><text class="tag" x=${x} y=${y + 6}>${t}</text>`;
  }

  private front() {
    const bar = (x: number, a: number, b: number) => svg`<path class="g crisp" d="M${x} ${a + 4}V${b - 4}"/><path d="M${x} ${a + 2}l2 9h-4zM${x} ${b - 2}l2-9h-4z"/>`;
    return svg`
      <path class="g crisp" d="M820 392H1013M817 445H964M817 667H964M683 720H1013"/>
      <path class="b crisp" d="M585 556h36M628 556h14M649 556h43M699 556h129M706 435v34M706 477v15M706 499v43M706 549v128"/>
      <path class="k crisp" d="M706 556H1013M706 600V766M542 640V766M595 701V766M870 640V766"/>
      <path class="k crisp" d="M706 556H964" stroke-width="2"/>
      <path class="b crisp" d="M720 556h26M754 556h26M796 556h32M706 556v46M706 620v57"/>
      <path class="k" d="M817.500 701V726L824 746V766"/>
      <path class="k w2" d="M683 720H620A78 78 0 0 1 542 642V470A78 78 0 0 1 620 392H792A78 78 0 0 1 870 470V642A78 78 0 0 1 792 720H787"/>
      <path class="k w2" d="M683 720A93 93 0 0 1 787 720"/>
      <circle class="k w2" cx=${CX} cy=${CY} r="86"/><circle class="k w2" cx=${CX} cy=${CY} r="38.500"/><circle class="k w2" cx=${CX} cy=${CY} r="35.500"/>
      ${[-PITCH, PITCH].map((dx) => [-PITCH, PITCH].map((dy) => this.hole(CX + dx, CY + dy)))}
      ${bar(954, 445, 556)}${bar(954, 556, 667)}${bar(1003, 392, 556)}${bar(1003, 556, 720)}
      ${this.vtext(945, 500, "38.89")}${this.vtext(945, 611, "38.89")}${this.vtext(994, 474, "57.5")}${this.vtext(994, 638, "57.5")}
      ${this.vtext(542, 769, "−57.5", "end")}${this.vtext(595, 769, "−38.89", "end")}${this.vtext(706, 769, "0", "end")}${this.vtext(824, 769, "38.89", "end")}${this.vtext(870, 769, "57.5", "end")}
      ${this.tag(501, 602, "B")}<path class="k crisp" d="M511 602h22"/><path d="M542 597v10l-10-5z"/>
      ${this.tag(647, 756, "C")}<path class="k crisp" d="M647 729v17"/><path d="M642 721h10l-5 10z"/>
      <rect class="k crisp" x="675" y="295" width="167" height="20"/>
      <path class="k crisp" d="M700 295v20M782 295v20M802 295v20M822 295v20M675 306h-10M688 298v15M680 305h15"/>
      <circle class="k" cx="687.500" cy="305.500" r="4.500"/>
      <text class="dim gt" x="703" y="312">Ø0.05</text><circle class="k" cx="769" cy="305" r="7.500"/><text class="tag" x="769" y="311">M</text>
      <text class="tag" x="792" y="311">A</text><text class="tag" x="812" y="311">B</text><text class="tag" x="832" y="311">C</text>
      <path class="k" d="M665 306L645 492M665 306L686 516"/><path d="M639 487h12l-6 11zM680 513h12l-6 10z"/>
      <path class="k" d="M996 324.500H883L828 425"/><path d="M827 427l2-10 4 2z"/>
      <text class="note" x="898" y="304">4X</text><text class="note" x="928" y="304">∅9</text><text class="note" x="961" y="304">通孔</text>
      <path class="k crisp" d="M898 309v10h20v-10M961 309h10M966 309v9"/><path class="k" d="M962 313l4 6 4-6"/>
      <text class="note" x="922" y="319">∅14</text><text class="note" x="973" y="319">9</text>`;
  }

  private side() {
    return svg`
      <path class="b w2 crisp" d="M1081 556h16M1103 556h44M1153 556h15M1175 556h79M1262 556h14" stroke-opacity=".7"/>
      <path class="k w2 crisp" d="M1198 392h44v328h-44zM1198 642H1096V470H1139M1167 470H1198M1242 450h8M1242 661h8M1250 449v214"/>
      <path class="k w2" d="M1139 470q14 3 28 0M1250 449h8l4 4v206l-4 4h-8"/>
      <path class="g w2 crisp" d="M1258 449v214"/>
      <path class="g crisp" d="M1199 470h15M1218 470h2M1224 470h2M1231 470h11M1199 641h11M1214 641h2M1220 641h2M1226 641h16"/>
      <path d="M1242 688v11l9-5z"/><path class="k crisp" d="M1250 694h12"/>${this.tag(1272, 693, "A")}`;
  }

  private frame() {
    return svg`
      <path class="k w2 crisp" d="M1516 196V974H386"/>
      <path class="k crisp" d="M1544 196V974"/>
      <path class="k w2 crisp" d="M1502 579H1545"/>
      <path class="k crisp" d="M1516 296h29M1516 438h29M1516 720h29M1516 861h29M496 975v12M646 975v12M796 975v12M1096 975v12M1245 975v12M1395 975v12"/>
      <path class="k w2 crisp" d="M802 975v12M831 975v12M860 975v12M888 975v12M917 975v12M945 960v27M974 975v12M1003 975v12M1031 975v12M1060 975v12M1089 975v12M945 196v3M387 579h3"/>
      <path class="k w3 crisp" d="M1544 974v13"/>
      ${["A", "B", "C", "D", "E", "F"].map((t, i) => svg`<text class="zone" x="1530" y=${233 + 141 * i}>${t}</text>`)}
      ${["1", "2", "3", "4", "5", "6", "7", "8"].map((t, i) => (i === 3 || i === 4 ? nothing : svg`<text class="zone" x=${420 + 150 * i} y="996">${t}</text>`))}`;
  }

  private titleBlock() {
    const t = (x: number, y: number, s: number, v: string) => svg`<text class="tb s${s}" x=${x} y=${y}>${v}</text>`;
    return svg`
      <path class="k w2 crisp" d="M1003 974V814H1516M1031 814v80M1060 814v80M1105 814v80M1151 814v160M1185 814v160M1231 814v160M1373 814v160M1003 874h228M1003 894h370M1037 894v80M1071 894v80M1117 894v80M1003 914h228M1231 923h285M1305 894v54M1339 894v54M1231 948h142M1373 866h143"/>
      <path class="k crisp" d="M1003 834h228M1003 854h228M1003 934h228M1003 954h228M1249 923v25M1268 923v25M1286 923v25"/>
      ${t(1017, 888, 8, "Mark")}${t(1047, 888, 7, "NO.")}${t(1129, 888, 7, "File NO.")}${t(1168, 888, 7, "Sign")}${t(1208, 888, 9, "Date")}
      ${t(1020, 907, 7, "Designer")}${t(1134, 907, 7, "Standard")}${t(1019, 947, 9, "Check")}${t(1020, 967, 6, "Technology")}${t(1134, 967, 7, "Approved")}
      ${t(1305, 857, 7, "Aluminum")}${t(1268, 912, 9, "Drawing Mark")}${t(1322, 912, 9, "Weight")}${t(1357, 912, 8, "Scale")}${t(1356, 938, 7, "1:1")}
      ${t(1252, 966, 9, "Sheet")}${t(1282, 966, 9, "1")}${t(1306, 966, 9, "of")}${t(1328, 966, 9, "1")}${t(1443, 897, 8, "##001")}`;
  }

  render() {
    return html`<svg role="img" aria-label="零件001 工程图"><g transform="translate(-386 -196)">
      <rect class="paper" x="386" y="196" width="1159" height="900"/>
      ${this.frame()}${this.titleBlock()}${this.front()}${this.side()}
      <text class="read" x="391" y="983">277.29mm</text><text class="read" x="541" y="983">比例：</text><text class="read" x="594" y="983">1:1</text>
    </g></svg>`;
  }
}

@customElement("app-root")
export class AppRoot extends LitElement {
  static styles = [base, css`
    :host { display: flex; flex-direction: column; height: 100vh; min-height: 600px; background: #e2e6e9; position: relative; overflow: hidden; }
    .bar { display: flex; align-items: center; flex: none; }
    .titlebar { height: 25px; padding-right: 2px; }
    .q { width: 24px; height: 24px; }
    .logo { width: 23px; padding-left: 3px; }
    .sep { width: 1px; height: 14px; background: #9aa0a5; margin: 0 7px 0 1px; }
    .qmenu { width: 14px; height: 20px; flex-direction: column; gap: 2px; }
    .qmenu::before { content: ""; width: 8px; height: 1px; background: #222; }
    .tri { width: 18px; }
    .tri::before { content: ""; border: 6px solid transparent; border-left: 0; border-right: 6px solid #1f86c9; }
    nav { display: flex; font-family: "Open Sans", "Noto Sans CJK SC", sans-serif; }
    nav a { padding: 0 9px; color: #000; white-space: nowrap; }
    .caption { flex: 1; text-align: center; color: #444; white-space: nowrap; }
    .win { width: 22px; height: 20px; }
    .tabs { height: 22px; border-bottom: 1px solid #b9bfc6; align-items: flex-end; }
    .file { width: 71px; height: 20px; margin: 1px 3px 0 1px; background: #2a5fb8; border: 1px solid #1c4ba0; box-shadow: inset 0 0 0 1px #5a8ad6; color: #fff; align-self: flex-start; }
    .tab { width: 44px; height: 21px; color: #333; }
    .tab.on { height: 22px; background: #fcfdfd; border: 1px solid #b9bfc6; border-bottom: 0; margin-bottom: -1px; }
    .right { margin-left: auto; display: flex; align-items: center; height: 20px; align-self: flex-start; }
    .search { display: flex; align-items: center; width: 142px; height: 20px; margin: 0 7px 0 8px; background: #fff; border: 1px solid #b9bfc6; padding-right: 6px; }
    .search input { flex: 1; min-width: 0; padding: 0 2px; outline: none; }
    .search input::placeholder { color: #777; opacity: 1; }
    .s20 { width: 20px; height: 20px; }
    .s16 { width: 17px; height: 20px; }
    .hgap { width: 8px; }
    .hmenu { width: 12px; height: 20px; }
    .tools { height: 32px; padding-top: 2px; }
    .grip { width: 2px; height: 16px; margin: 0 7px 0 4px; background: repeating-linear-gradient(#6c7687 0 2px, transparent 2px 4px); }
    .grip.mid { margin: 0 4px 0 6px; }
    .flt { width: 131px; margin: 0 26px 0 5px; background: #e6eaec; border-color: #d0d5d9; }
    .flt .caret { border-top-color: #a3a7ab; }
    .local { margin-right: 28px; }
    .curve { width: 132px; }
    .vsep { width: 1px; height: 18px; background: #c3c8cc; margin: 0 4px 0 2px; }
    .work { flex: 1; display: flex; min-height: 0; }
    manager-panel { width: 384px; flex: none; }
    .doc { flex: 1; min-width: 0; display: flex; flex-direction: column; border-left: 1px solid #b9bfc6; margin-left: 1px; border-bottom: 1px solid #b9bfc6; }
    .doctabs { height: 23px; border-bottom: 1px solid #b9bfc6; margin-left: -1px; background: #e2e6e9; align-items: flex-end; }
    .dt { width: 152px; height: 22px; gap: 6px; padding: 2px 16px 0 0; color: #000; display: flex; align-items: center; justify-content: flex-end; white-space: nowrap; }
    .dt.on { width: 156px; height: 23px; background: #fcfdfd; border: 1px solid #b9bfc6; border-bottom: 0; margin-bottom: -1px; padding: 0 15px 0 0; }
    .x { width: 10px; height: 10px; display: block; stroke: #73603a; stroke-width: 2; fill: none; }
    .plus { width: 24px; height: 20px; color: #a29c9a; }
    .plus svg { width: 10px; height: 10px; stroke: #a29c9a; stroke-width: 2; }
    .more { margin-left: auto; width: 20px; height: 20px; flex-direction: column; gap: 1px; }
    .more::before { content: ""; width: 8px; height: 2px; background: #8b8583; }
    .more .caret { border-width: 4px; border-top-color: #8b8583; border-bottom: 0; }
    .canvas { flex: 1; min-height: 0; position: relative; margin-right: 1px; }
    drawing-sheet { height: 100%; }
    .hint { position: absolute; left: 22px; top: 5px; font-size: 11px; line-height: 14px; margin: 0; }
    .views { position: absolute; left: 528px; top: 2px; display: flex; align-items: center; }
    .views button { width: 25px; height: 23px; }
    .views .dd { width: 37px; gap: 5px; }
    .views .lit { background: #ffe38a; border: 1px solid #c9922e; }
    .layer { display: flex; align-items: center; gap: 1px; width: 116px; height: 22px; padding: 0 6px 0 4px; background: #fff; border: 1px solid #b9bfc6; }
    .layer .sel { border: 0; flex: 1; }
    .layer .sel .caret { margin-right: 0; }
    .layer .sel select { padding-right: 8px; }
    .sheets { height: 23px; align-items: flex-start; padding-left: 1px; }
    .sheets .nav { width: 15px; height: 20px; }
    .nav svg { width: 8px; height: 8px; fill: #6d7174; }
    .sheet { width: 54px; height: 20px; background: #fcfdfd; border: 1px solid #b9bfc6; border-top: 0; color: #000; }
    .status { height: 29px; padding: 0 1px 0 6px; }
    .status p { margin: 0; flex: 1; }
    .status .sbtn { width: 21px; height: 21px; margin-left: 8px; }
    .status .lit { background: #ffe38a; border: 1px solid #c9922e; margin-left: 15px; }
    .status .ico { width: 15px; height: 15px; }
    .ssep { width: 1px; height: 25px; background: #8d9297; }
    .cmd { width: 350px; height: 22px; background: #fff; border: 1px solid #b9bfc6; margin-left: 8px; padding: 0 2px; outline: none; }
    .cmd::selection { background: #0078d7; color: #fff; }
    .meter { position: absolute; right: 20px; top: 812px; display: flex; align-items: center; }
    .ring { width: 66px; height: 70px; display: block; position: relative; }
    .big { font: 300 24px Roboto, sans-serif; fill: #555; }
    .pct { font: 13px Roboto, sans-serif; fill: #444; }
    .pill { display: flex; align-items: center; gap: 4px; height: 40px; padding: 0 9px 0 16px; margin-left: -12px; background: #f1f2f2; border-radius: 0 20px 20px 0; font-size: 11px; color: #000; box-shadow: 0 1px 2px #8887; }
    .rates { display: grid; grid-template-columns: 18px auto; }
    .rates svg { width: 8px; height: 8px; align-self: center; fill: none; stroke-width: 1.4px; }
    .upc { stroke: #2d8cf0; }
    .dnc { stroke: #18a83c; }
    .add { width: 16px; height: 16px; border-radius: 50%; background: #2f95f5; }
    .add svg { width: 8px; height: 8px; stroke: #fff; stroke-width: 2; }
    .mark { position: absolute; right: 2px; bottom: 6px; font: 300 38px/54px "Open Sans", "Noto Sans CJK SC", sans-serif; color: rgba(228, 231, 233, .75); text-shadow: 1px 1px 1px rgba(70, 75, 80, .6); white-space: nowrap; pointer-events: none; }
  `];

  @property() file = "零件001";
  @state() private tab = "标注";
  @query(".cmd") private cmd!: HTMLInputElement;

  firstUpdated() {
    this.cmd.focus();
    this.cmd.select();
  }

  private i(name: string) {
    return html`<svg class="ico" viewBox="0 0 16 16" aria-hidden="true">${small[name]}</svg>`;
  }

  private b(name: string, cls: string, menu = false) {
    return html`<button class=${cls} aria-label=${name}>${this.i(name)}${menu ? caret : nothing}</button>`;
  }

  private plus() {
    return html`<svg viewBox="0 0 10 10"><path d="M5 0v10M0 5h10"/></svg>`;
  }

  private x() {
    return html`<svg class="x" viewBox="0 0 10 10"><path d="M1 1l8 8M9 1L1 9"/></svg>`;
  }

  render() {
    return html`
      <header class="bar titlebar">
        <span class="logo">${this.i("logo")}</span><span class="sep"></span>
        ${["new", "open", "save", "print", "printp", "undo", "redo", "orbit"].map((n) => this.b(n, "q"))}
        <button class="qmenu" aria-label="自定义">${caret}</button><button class="tri" aria-label="收起"></button>
        <nav>${["文件(F)", "编辑(E)", "视图(V)", "插入(I)", "属性(A)", "查询(N)", "工具(T)", "实用工具(U)", "应用(P)", "窗口(W)", "帮助(H)", "云存储"].map((m) => html`<a href="#">${m}</a>`)}</nav>
        <span class="caption">中望3D 2025 SP2 x64 - [* ${this.file}.Z3DRW]</span>
        ${["min", "restore", "close"].map((n) => this.b(n, "win"))}
      </header>
      <div class="bar tabs">
        <button class="file">文件(F)</button>
        ${["布局", "标注", "绘图", "工具", "查询", "管路"].map((t) => html`<button class=${classMap({ tab: true, on: t === this.tab })} @click=${() => (this.tab = t)}>${t}</button>`)}
        <div class="right">
          ${this.b("up", "s16")}
          <label class="search"><input aria-label="查找命令" placeholder="查找命令">${this.i("find")}</label>
          ${this.b("gear", "s20")}<span class="hgap"></span>${this.b("help", "s20")}
          <button class="hmenu" aria-label="帮助菜单">${caret}</button>
          ${["dmin", "drest", "dclose"].map((n) => this.b(n, "s16"))}
        </div>
      </div>
      <tool-ribbon></tool-ribbon>
      <div class="bar tools">
        <span class="grip"></span>${this.i("filter")}
        <span class="sel flt"><select disabled aria-label="过滤器"><option></option></select>${caret}</span>
        <span class="local">局部</span>${this.b("local", "q")}
        <span class="vsep"></span>
        <span class="sel curve"><select aria-label="曲线"><option>单曲线</option></select>${caret}</span>
        ${["gearcur", "play", "dots", "seg", "mid", "cdot", "cquad", "spl", "wave", "tang", "ray"].map((n) => this.b(n, "q"))}
        <span class="grip mid"></span>
        ${["bulb", "abc", "paint", "orbit", "eraser", "gtol", "magnet", "cone", "dim", "half"].map((n) => this.b(n, "q"))}
      </div>
      <main class="work">
        <manager-panel></manager-panel>
        <section class="doc">
          <div class="bar doctabs">
            <div class="dt"><span>* ${this.file}.Z3PRT</span><button aria-label="关闭">${this.x()}</button></div>
            <div class="dt on"><span>* ${this.file}.Z3DRW</span><button aria-label="关闭">${this.x()}</button></div>
            <button class="plus" aria-label="新建">${this.plus()}</button>
            <button class="more" aria-label="更多">${caret}</button>
          </div>
          <div class="canvas">
            <drawing-sheet></drawing-sheet>
            <p class="hint">&lt;单击右键&gt;环境相关选项.<br>&lt;Shift + 鼠标右键&gt; 显示选择过滤器.</p>
            <div class="views">
              ${this.b("exit", "v")}${this.b("eraser", "v")}${this.b("broom", "v")}${this.b("comp", "lit")}${this.b("xy", "v")}
              ${["grid", "view", "dimv", "screen"].map((n) => this.b(n, "dd", true))}
              ${this.b("dotc", "v")}${this.b("black", "v")}${this.b("layers", "dd", true)}
              <div class="layer">${this.i("lamp")}${this.i("sun")}<span class="sel"><select aria-label="图层"><option>Layer0000</option></select>${caret}</span></div>
            </div>
          </div>
          <div class="bar sheets">
            ${["M0 0h1v8H0zM7 0v8L2 4z", "M6 0v8L1 4z", "M2 0v8l5-4z", "M7 0h1v8H7zM1 0v8l5-4z"].map((d, n) => html`<button class="nav" aria-label="图纸导航 ${n + 1}"><svg viewBox="0 0 8 8"><path d=${d}></path></svg></button>`)}
            <button class="sheet">图纸1</button>
            <button class="plus" aria-label="新建图纸">${this.plus()}</button>
          </div>
        </section>
      </main>
      <footer class="bar status">
        <p>选择命令或实体</p><span class="ssep"></span>
        ${this.b("props", "sbtn lit")}${this.b("monitor", "sbtn")}${this.b("list", "sbtn")}
        <input class="cmd" aria-label="命令" value="#59700">
      </footer>
      <div class="meter">
        <svg class="ring" viewBox="0 0 66 70">
          <g fill="#3fdc70"><path d="M4 36C4 14 16 2 28 2c18 0 36 16 36 34S46 69 34 69 4 58 4 36z" opacity=".6"/><ellipse cx="33" cy="37" rx="33" ry="29" opacity=".45"/><path d="M2 44C0 28 18 6 38 8s28 22 26 36-12 26-26 26S4 60 2 44z" opacity=".5"/></g>
          <circle cx="33" cy="36" r="28" fill="#35d468"/><circle cx="33" cy="36" r="25" fill="#f8f9f9"/>
          <text class="big" x="15" y="44">65</text><text class="pct" x="41" y="44">%</text>
        </svg>
        <div class="pill"><div class="rates"><svg class="upc" viewBox="0 0 8 8"><path d="M4 8V1M1 4l3-3 3 3"/></svg><span>1.6K/s</span><svg class="dnc" viewBox="0 0 8 8"><path d="M4 0v7M1 4l3 3 3-3"/></svg><span>5.9K/s</span></div><button class="add" aria-label="加速">${this.plus()}</button></div>
      </div>
      <div class="mark">CSDN @清音菩提—寻寻</div>`;
  }
}
